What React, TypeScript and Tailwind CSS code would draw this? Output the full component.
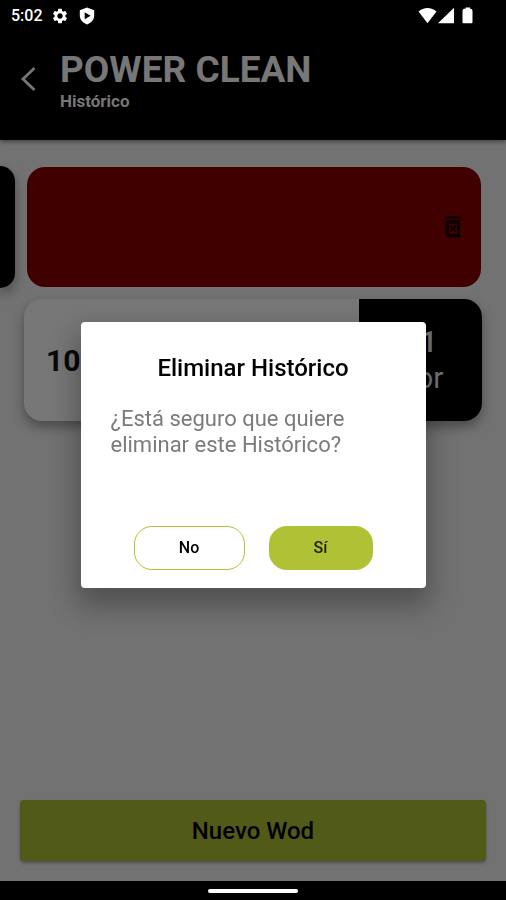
import { MdSettings } from "react-icons/md";

function ShieldIcon() {
  return (
    <svg viewBox="0 0 16 18" className="ml-2.5 h-[18px] w-4" aria-hidden="true">
      <path d="M8 0.5 15.2 3.2V8.6C15.2 12.8 12.2 16 8 17.5 3.8 16 0.8 12.8 0.8 8.6V3.2Z" fill="#fff" />
      <path d="M5.7 5.2 11.6 8.7 5.7 12.2Z" fill="#000" />
    </svg>
  );
}

function StatusBar() {
  return (
    <div className="flex h-8 items-center justify-between bg-black pr-8 pl-[11px] text-white">
      <div className="flex items-center">
        <span className="w-10 text-base font-medium">5:02</span>
        <MdSettings className="size-[18px]" aria-hidden="true" />
        <ShieldIcon />
      </div>
      <svg viewBox="0 0 56 18" className="h-[18px] w-14" fill="#fff" aria-hidden="true">
        <path d="M0.5 4.4C3 2.2 6.2 0.9 9.5 0.9S16 2.2 18.5 4.4L9.5 16.3Z" />
        <path d="M20 16.3 36 0.8V16.3Z" />
        <path d="M47.5 0.5H52V1.8H53Q54.5 2.2 54.5 4V15.3Q54.5 16.3 53.5 16.3H45.5Q44.5 16.3 44.5 15.3V4Q44.5 2.2 46 1.8H47.5Z" />
      </svg>
    </div>
  );
}

function BackIcon() {
  return (
    <svg viewBox="0 0 16 26" className="h-[26px] w-4" fill="none" stroke="currentColor" strokeWidth="2.8" aria-hidden="true">
      <path d="M14.5 2 3 13 14.5 24" />
    </svg>
  );
}

function TrashIcon() {
  return (
    <svg viewBox="0 0 16 22" className="h-[22px] w-4" fill="none" stroke="#0c0000" aria-hidden="true">
      <path d="M0 1.5H16" strokeWidth="2.6" />
      <path d="M2.4 5.9H13.6V19.6H2.4Z" strokeWidth="3.2" />
      <path d="M5 9.5 11 15.7M11 9.5 5 15.7" strokeWidth="1.8" />
    </svg>
  );
}

function DeleteDialog() {
  return (
    <div className="fixed inset-0 flex items-center justify-center px-20 pt-[10px]">
      <div
        role="dialog"
        aria-modal="true"
        aria-labelledby="dialog-title"
        className="flex w-full max-w-[345px] flex-col rounded bg-white px-[30px] pt-[30px] pb-[18px] shadow-[0_14px_28px_4px_rgba(0,0,0,0.3)]"
      >
        <h2 id="dialog-title" className="text-center text-2xl leading-8 font-medium text-black">
          Eliminar Histórico
        </h2>
        <p className="mt-[22px] text-[22px] leading-[26px] text-[#7b7b7b]">¿Está seguro que quiere eliminar este Histórico?</p>
        <div className="mt-[68px] flex justify-center gap-6 text-base font-medium text-black">
          <button type="button" className="h-11 w-[111px] rounded-[18px] border border-[#b0c136]">
            No
          </button>
          <button type="button" className="h-11 w-[104px] rounded-[18px] bg-[#b0c136] text-[#20230a]">
            Sí
          </button>
        </div>
      </div>
    </div>
  );
}

export default function App() {
  return (
    <div className="flex min-h-screen flex-col overflow-hidden bg-[#727272] font-[Roboto,sans-serif]">
      <StatusBar />
      <header className="flex h-[108px] items-start bg-black pt-4 text-[#777] shadow-[0_2px_4px_rgba(0,0,0,0.4)]">
        <button type="button" aria-label="Volver" className="mt-[18px] ml-5 w-10">
          <BackIcon />
        </button>
        <div>
          <h1 className="text-[37px] leading-11 font-bold">POWER CLEAN</h1>
          <p className="text-[17px] leading-[18px] font-bold">Histórico</p>
        </div>
      </header>

      <main className="flex flex-1 flex-col pt-[26px]">
        <div className="flex h-[122px] items-center">
          <div className="h-full w-[15px] shrink-0 rounded-r-[18px] bg-black shadow-[0_6px_12px_rgba(0,0,0,0.35)]" />
          <div className="mr-[25px] ml-3 flex h-[120px] flex-1 items-center justify-end rounded-[18px] bg-[#400000] pr-5">
            <button type="button" aria-label="Eliminar">
              <TrashIcon />
            </button>
          </div>
        </div>

        <div className="mx-6 mt-[11px] flex h-[122px] overflow-hidden rounded-[18px] bg-[#777] shadow-[0_6px_12px_rgba(0,0,0,0.35)]">
          <div className="flex flex-1 items-center pl-[22px] text-[30px] font-bold text-[#080808]">10</div>
          <div className="flex w-[123px] flex-col items-center justify-center bg-black text-[30px] leading-9 text-[#777]">
            <span className="font-medium">21</span>
            <span>Por</span>
          </div>
        </div>

        <button
          type="button"
          className="mx-5 mt-auto mb-5 h-[61px] rounded bg-[#525a18] text-2xl font-medium text-black shadow-[0_2px_3px_rgba(0,0,0,0.3)]"
        >
          Nuevo Wod
        </button>
      </main>

      <div className="flex h-[19px] items-center justify-center bg-black">
        <div className="h-1 w-[90px] rounded-full bg-white" />
      </div>
      <DeleteDialog />
    </div>
  );
}
